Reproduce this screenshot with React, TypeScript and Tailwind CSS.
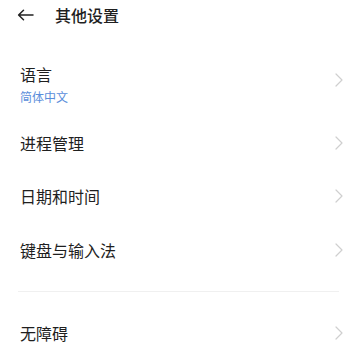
import { ReactNode } from "react";

function Chevron() {
  return (
    <svg width="10" height="14" viewBox="0 0 10 14" fill="none" className="shrink-0">
      <polyline points="2,1 8,7 2,13" stroke="#cfcfcf" strokeWidth="1.2" strokeLinecap="round" strokeLinejoin="round" />
    </svg>
  );
}

function Row({ children, className = "" }: { children: ReactNode; className?: string }) {
  return (
    <div className={`flex items-center justify-between pl-[20px] pr-[13px] ${className}`}>
      {children}
    </div>
  );
}

export default function App() {
  const rows = ["进程管理", "日期和时间", "键盘与输入法"];

  return (
    <div
      className="h-[360px] w-[357px] overflow-hidden bg-white text-[#1f1f1f]"
      style={{ fontFamily: '"Noto Sans CJK SC", "Noto Sans", sans-serif' }}
    >
      {/* Header */}
      <div className="flex h-[30px] items-center pl-[17px]">
        <svg width="17" height="12" viewBox="0 0 17 12" fill="none">
          <path d="M16 6H2M6.5 1.2L1.6 6l4.9 4.8" stroke="#222" strokeWidth="1.5" strokeLinecap="round" strokeLinejoin="round" />
        </svg>
        <span className="ml-[21px] text-[16px] font-medium leading-none">其他设置</span>
      </div>

      {/* Language */}
      <Row className="mt-[22px] h-[64px]">
        <div className="flex flex-col">
          <span className="text-[16px] leading-[22px]">语言</span>
          <span className="mt-[4px] text-[12px] leading-[16px] text-[#5b8edb]">简体中文</span>
        </div>
        <div className="mb-[9px]">
          <Chevron />
        </div>
      </Row>

      {rows.map((label) => (
        <Row key={label} className="h-[53.5px]">
          <span className="text-[16px] leading-[22px]">{label}</span>
          <Chevron />
        </Row>
      ))}

      <div className="mx-[18px] mt-[14px] h-px bg-[#f0f0f0]" />

      <Row className="mt-[15px] h-[53px]">
        <span className="text-[16px] leading-[22px]">无障碍</span>
        <Chevron />
      </Row>
    </div>
  );
}
